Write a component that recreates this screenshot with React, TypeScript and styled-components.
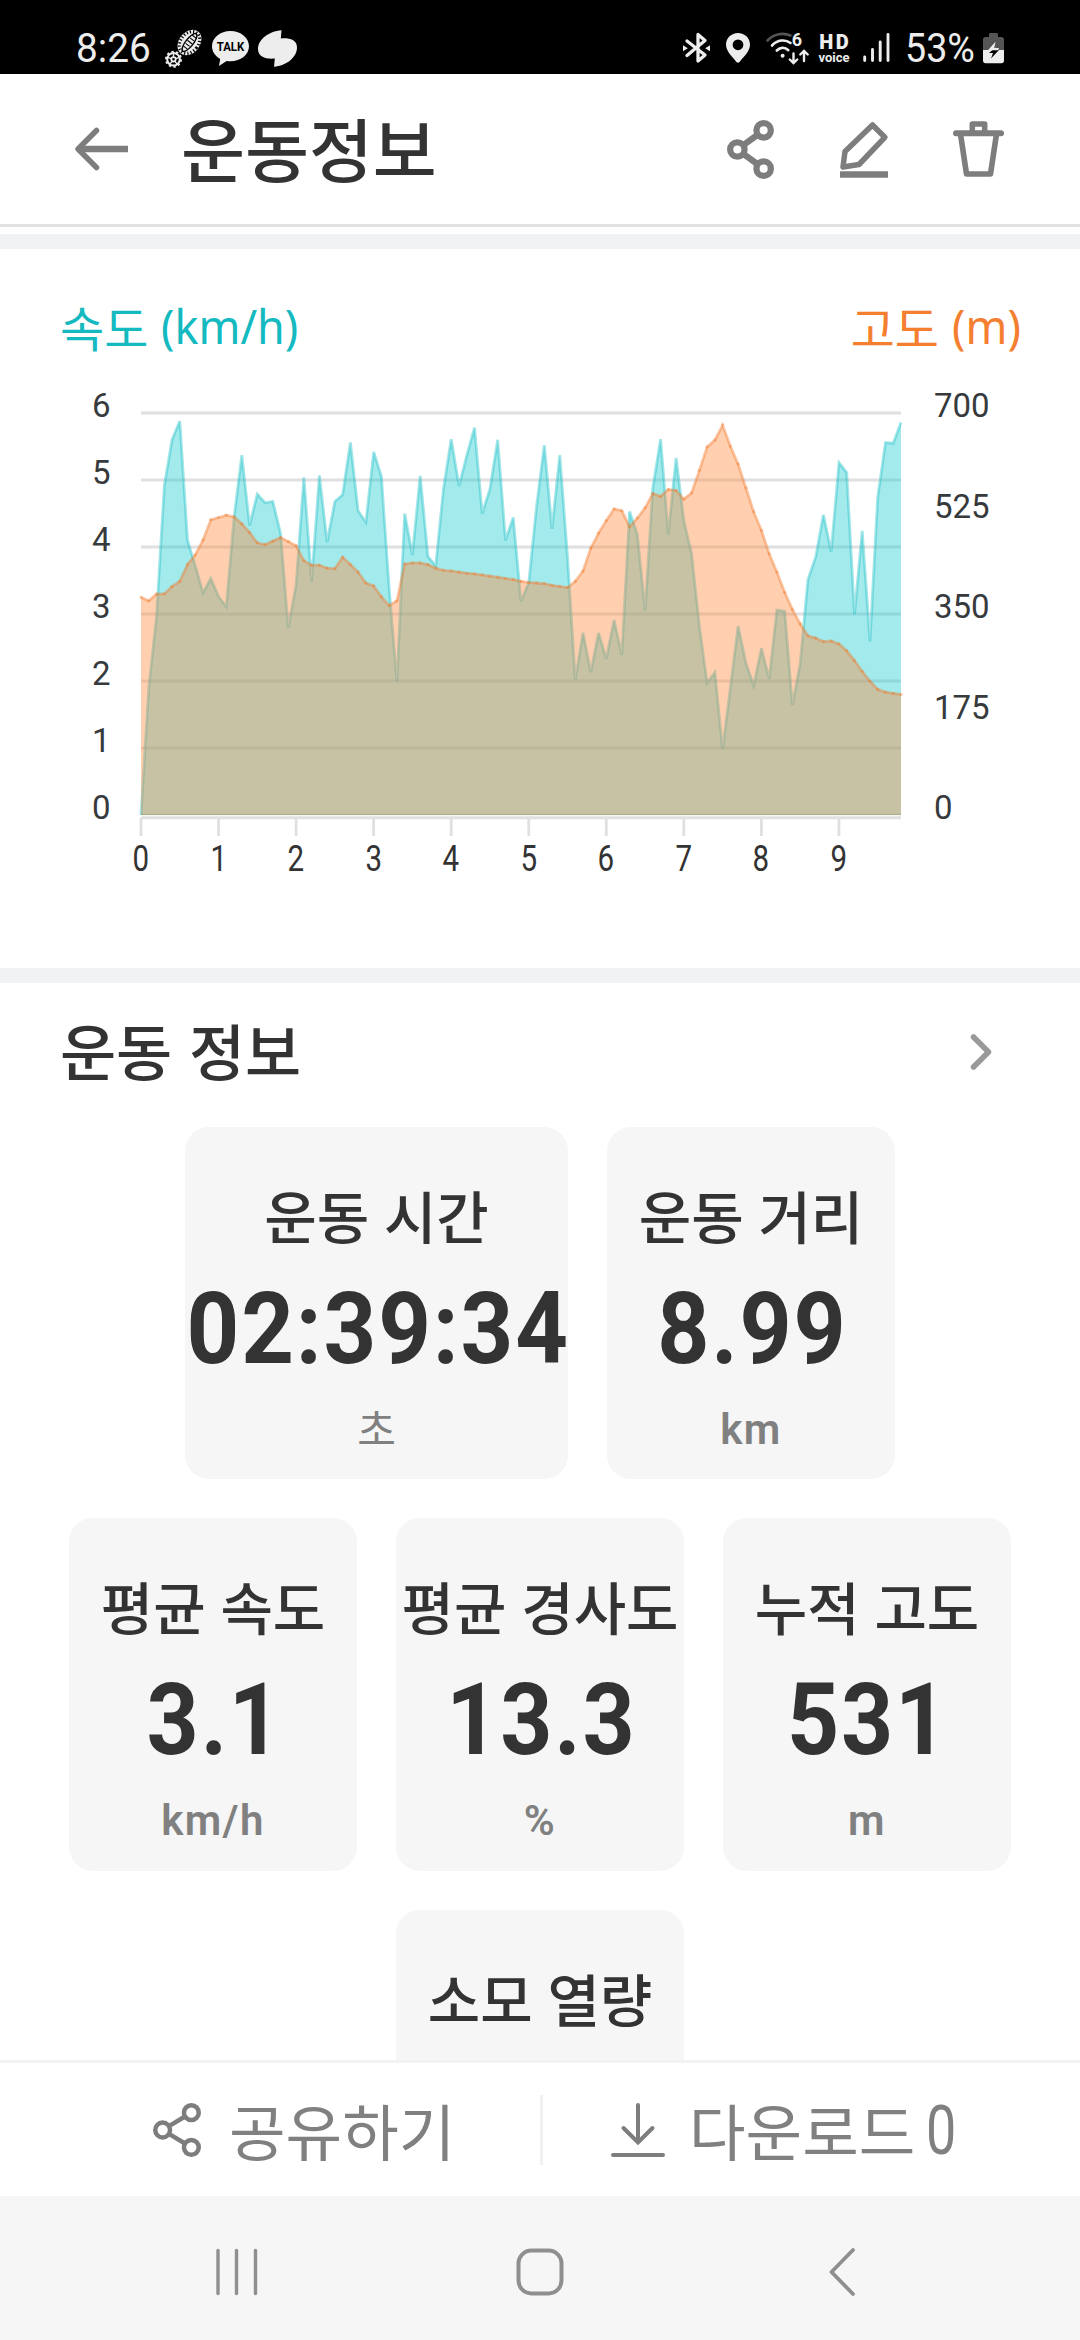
import React from "react";
import styled, { createGlobalStyle } from "styled-components";

const GlobalStyle = createGlobalStyle`
  * { box-sizing: border-box; }
  body {
    margin: 0;
    background: #fff;
    font-family: "Noto Sans CJK KR", Roboto, sans-serif;
    color: #333;
  }
  svg { display: block; flex: none; overflow: visible; }
`;

const Screen = styled.div`
  width: 1080px;
  height: 2340px;
  overflow: hidden;
  display: flex;
  flex-direction: column;
  background: #fff;
`;

const StatusBar = styled.div`
  height: 74px;
  flex: none;
  display: flex;
  justify-content: space-between;
  align-items: flex-start;
  padding: 30px 76px 0 76px;
  background: #000;
  color: #ededed;
  font-family: Roboto, sans-serif;
`;

const StatusGroup = styled.div`
  display: flex;
  align-items: flex-start;
`;

const Slot = styled.div<{ $ml: number; $w: number }>`
  width: ${(p) => p.$w}px;
  margin-left: ${(p) => p.$ml}px;
  flex: none;
`;

const StatusText = styled.div<{ $scale: number }>`
  font-size: 40px;
  line-height: 37px;
  white-space: nowrap;
  transform-origin: left center;
  transform: scaleX(${(p) => p.$scale});
`;

const HdBadge = styled.div`
  display: flex;
  flex-direction: column;
  align-items: center;
  padding-top: 3px;
`;
const HdTop = styled.span`
  font-size: 20px;
  line-height: 18px;
  font-weight: 900;
  letter-spacing: 2.5px;
  margin-right: -2.5px;
  white-space: nowrap;
`;
const HdBottom = styled.span`
  font-size: 13px;
  line-height: 13px;
  font-weight: 700;
  white-space: nowrap;
`;

const Header = styled.header`
  height: 153px;
  flex: none;
  display: flex;
  align-items: center;
  padding: 0 76px 0 75px;
  border-bottom: 3px solid #e2e2e2;
`;

const Title = styled.h1`
  margin: -4px 0 0 53px;
  font-size: 69.5px;
  line-height: 100px;
  font-weight: 500;
  white-space: nowrap;
`;

const Actions = styled.div`
  margin-left: auto;
  display: flex;
  align-items: center;
  gap: 65.5px;
`;

const Band = styled.div<{ $mt?: number }>`
  height: 15px;
  flex: none;
  margin-top: ${(p) => p.$mt ?? 0}px;
  background: #f1f2f4;
`;

const ChartSection = styled.section`
  height: 719px;
  flex: none;
`;

const Legend = styled.div`
  height: 123px;
  display: flex;
  justify-content: space-between;
  padding: 42px 59px 0 60px;
`;

const LegendText = styled.div<{ $color: string }>`
  display: flex;
  gap: 13px;
  font-size: 48px;
  line-height: 70px;
  white-space: pre;
  color: ${(p) => p.$color};
`;

const LegendUnit = styled.span<{ $w: number }>`
  width: ${(p) => p.$w}px;
  font-family: "Noto Sans", sans-serif;
  font-size: 48px;
  line-height: 70px;
  transform-origin: left center;
  transform: scaleX(0.935);
`;

const ChartRow = styled.div`
  display: flex;
  height: 466px;
`;

const Axis = styled.div<{ $side: "left" | "right" }>`
  display: flex;
  flex-direction: column;
  width: ${(p) => (p.$side === "left" ? 141 : 170)}px;
  padding-left: ${(p) => (p.$side === "left" ? 92 : 33)}px;
  margin-top: ${(p) => (p.$side === "left" ? 0 : -17)}px;
  color: #373a3d;
  font-family: Roboto, sans-serif;
  font-size: 33px;
`;

const AxisLabel = styled.span<{ $h: number }>`
  flex: none;
  height: ${(p) => p.$h}px;
  line-height: ${(p) => p.$h + 1}px;
`;

const XAxis = styled.div`
  display: flex;
  padding-left: 102px;
  height: 40px;
`;

const XLabel = styled.span`
  width: 77.55px;
  text-align: center;
  font-family: Roboto, sans-serif;
  font-size: 36px;
  line-height: 43px;
  transform: scaleX(0.82);
`;

const InfoSection = styled.section`
  height: 1077px;
  flex: none;
  overflow: hidden;
  display: flex;
  flex-direction: column;
`;

const InfoHead = styled.div`
  height: 144px;
  flex: none;
  display: flex;
  justify-content: space-between;
  padding: 0 88px 0 60px;
`;

const InfoTitle = styled.h2`
  margin: 22px 0 0;
  font-size: 61px;
  line-height: 90px;
  font-weight: 500;
  word-spacing: 3px;
  white-space: nowrap;
`;

const Cards = styled.div`
  display: flex;
  flex-wrap: wrap;
  justify-content: center;
  gap: 39px;
  padding: 0 60px;
`;

const Card = styled.article<{ $wide?: boolean }>`
  width: ${(p) => (p.$wide ? 383 : 288)}px;
  height: 352.3px;
  flex: none;
  display: flex;
  flex-direction: column;
  align-items: center;
  padding-top: 47px;
  border-radius: 24px;
  background: #f6f6f6;
`;

const CardLabel = styled.div`
  font-size: 57px;
  line-height: 80px;
  font-weight: 500;
  word-spacing: 2px;
  white-space: nowrap;
`;

const CardValue = styled.div<{ $wide?: boolean }>`
  margin-top: 13px;
  padding-left: 3px;
  font-family: Roboto, sans-serif;
  font-size: 100px;
  line-height: 124px;
  font-weight: 700;
  letter-spacing: 2px;
  white-space: nowrap;
  transform: scaleX(${(p) => (p.$wide ? 0.92 : 0.91)});
`;

const CardUnit = styled.div`
  margin-top: 11px;
  font-family: Roboto, "Noto Sans CJK KR", sans-serif;
  font-size: 42px;
  line-height: 56px;
  font-weight: 600;
  letter-spacing: 1.3px;
  color: #808080;
`;

const CardUnitKo = styled(CardUnit)`
  margin-top: 8px;
  font-family: "Noto Sans CJK KR", sans-serif;
  font-size: 42px;
  font-weight: 400;
  letter-spacing: 0;
`;

const BottomBar = styled.div`
  height: 136px;
  flex: none;
  display: flex;
  align-items: center;
  border-top: 3px solid #f2f2f2;
`;

const BottomAction = styled.div<{ $w: number; $pl: number; $gap: number }>`
  width: ${(p) => p.$w}px;
  flex: none;
  display: flex;
  align-items: center;
  gap: ${(p) => p.$gap}px;
  padding-left: ${(p) => p.$pl}px;
  font-size: 61.5px;
  line-height: 90px;
  white-space: nowrap;
  color: #808080;
`;

const BottomText = styled.span`
  margin-top: 1px;
`;

const Count = styled.span`
  margin: 3px 0 0 -13px;
  font-family: Roboto, sans-serif;
  font-size: 69px;
  transform-origin: left center;
  transform: scaleX(0.78);
`;

const Divider = styled.div`
  width: 3px;
  height: 70px;
  flex: none;
  background: #f1f1f3;
`;

const NavBar = styled.nav`
  height: 144px;
  flex: none;
  display: grid;
  grid-template-columns: repeat(3, 302.5px);
  justify-items: center;
  align-items: center;
  padding: 8px 0 0 86px;
  background: #f6f6f6;
`;

const SPEED = [
  0, 1.9, 2.96, 4.91, 5.6, 5.88, 4.1, 3.72, 3.32, 3.53, 3.26, 3.11, 4.44, 5.37, 4.32, 4.79, 4.66, 4.68, 4.2, 2.79,
  3.44, 5.04, 3.48, 5.07, 4.07, 4.68, 4.78, 5.56, 4.54, 4.37, 5.42, 5.05, 3.38, 1.99, 4.5, 3.88, 5.06, 3.86, 3.72, 4.86,
  5.61, 4.91, 5.36, 5.78, 4.5, 4.87, 5.6, 4.1, 4.44, 3.19, 3.47, 4.6, 5.52, 4.27, 5.37, 3.85, 2.02, 2.72, 2.13, 2.72,
  2.33, 2.91, 2.39, 4.53, 4.19, 3.05, 4.88, 5.61, 4.19, 5.33, 4.39, 3.9, 2.82, 1.97, 2.13, 0.98, 1.9, 2.82, 2.27, 1.93,
  2.49, 2.03, 3.06, 3.04, 1.64, 2.26, 3.51, 3.85, 4.48, 3.93, 5.26, 5.11, 2.99, 4.24, 2.59, 4.74, 5.56, 5.55, 5.86,
];

const ELEVATION = [
  379, 373, 385, 385, 398, 407, 436, 453, 479, 514, 518, 522, 519, 507, 492, 474, 471, 477, 483, 476,
  469, 443, 435, 435, 430, 429, 449, 436, 423, 404, 399, 380, 365, 373, 437, 439, 439, 436, 430, 426,
  425, 423, 421, 420, 418, 416, 414, 412, 410, 407, 405, 404, 403, 400, 398, 396, 407, 425, 465, 491,
  513, 533, 530, 502, 517, 535, 560, 555, 567, 565, 550, 561, 600, 641, 653, 679, 642, 611, 570, 528,
  496, 455, 423, 388, 358, 333, 312, 308, 302, 303, 298, 286, 269, 250, 233, 219, 214, 212, 210,
];

const PLOT_W = 760;
const PLOT_H = 466;
const TOP = 41;
const STEP = 67;
const BASE = TOP + 6 * STEP;

const toPoints = (data: number[], max: number) =>
  data.map((v, i) => [(i * PLOT_W) / (data.length - 1), BASE - (v / max) * (BASE - TOP)] as const);

const Series = ({ data, max, fill, stroke, dots }: { data: number[]; max: number; fill: string; stroke: string; dots?: boolean }) => {
  const pts = toPoints(data, max);
  const line = pts.map(([x, y]) => `${x.toFixed(1)},${y.toFixed(1)}`).join(" ");
  return (
    <g>
      <polygon points={`0,${BASE} ${line} ${PLOT_W},${BASE}`} fill={fill} />
      <polyline points={line} fill="none" stroke={stroke} strokeWidth={2.8} />
      {dots && pts.map(([x, y], i) => <circle key={i} cx={x} cy={y} r={1.5} fill={stroke} />)}
    </g>
  );
};

const Chart = () => (
  <svg width={PLOT_W} height={PLOT_H} viewBox={`0 0 ${PLOT_W} ${PLOT_H}`}>
    {[0, 1, 2, 3, 4, 5].map((i) => (
      <line key={i} x1={0} x2={PLOT_W} y1={TOP + i * STEP} y2={TOP + i * STEP} stroke="#e0e0e2" strokeWidth={2.8} />
    ))}
    <Series data={SPEED} max={6} fill="rgba(25,203,208,0.4)" stroke="rgba(25,190,198,0.4)" />
    <Series data={ELEVATION} max={700} fill="rgba(255,135,58,0.4)" stroke="rgba(240,120,40,0.4)" dots />
    <line x1={0} x2={PLOT_W} y1={BASE - 0.5} y2={BASE - 0.5} stroke="rgba(120,140,90,0.3)" strokeWidth={1.5} />
    <line x1={0} x2={PLOT_W} y1={BASE + 2.8} y2={BASE + 2.8} stroke="#e0e0e0" strokeWidth={3} />
    {Array.from({ length: 10 }, (_, i) => (
      <line key={i} x1={i * 77.55} x2={i * 77.55} y1={BASE + 3} y2={BASE + 21} stroke="#e0e0e0" strokeWidth={2.8} />
    ))}
  </svg>
);

const GRAY = "#7d7d7d";

const TireIcon = () => (
  <svg width="38" height="38" viewBox="0 0 38 38">
    <g transform="rotate(38 24.5 12.5)">
      <ellipse cx="24.5" cy="12.5" rx="10.5" ry="14" fill="#ededed" />
      <ellipse cx="24.5" cy="12.5" rx="8.8" ry="12" fill="none" stroke="#000" strokeWidth="3" strokeDasharray="1.2 2" />
      <ellipse cx="24.5" cy="12.5" rx="3.8" ry="11" fill="none" stroke="#000" strokeWidth="1.4" />
      <path d="M22 5h5M22 8.500h5M21.500 12h6M22 15.500h5M22 19h5" stroke="#000" strokeWidth="1.1" />
    </g>
    <circle cx="8.500" cy="29.300" r="6.300" fill="none" stroke="#ededed" strokeWidth="2" />
    <circle cx="8.500" cy="29.300" r="7.600" fill="none" stroke="#ededed" strokeWidth="1.800" strokeDasharray="2.400 2.370" />
    <circle cx="8.500" cy="29.300" r="2.200" fill="none" stroke="#ededed" strokeWidth="1.800" />
    <path d="M8.500 27v-4M10.700 28.600l3.800-1.200M9.900 31.200l2.300 3.200M7.100 31.200l-2.300 3.200M6.300 28.600l-3.800-1.200" stroke="#ededed" strokeWidth="1.400" />
  </svg>
);

const TalkIcon = () => (
  <svg width="37" height="38" viewBox="0 0 37 38">
    <path d="M18.500 1C8.300 1 0 7.700 0 16.300c0 5.400 3.200 9.900 8.200 12.600L7 36l7.600-5c1.300.2 2.600.3 3.900.3C28.700 31.300 37 24.900 37 16.300S28.700 1 18.500 1z" fill="#ededed" />
    <text x="18.500" y="21.300" textAnchor="middle" textLength="27.500" lengthAdjust="spacingAndGlyphs" fontFamily="Roboto, sans-serif" fontWeight="700" fontSize="13.500" fill="#000">
      TALK
    </text>
  </svg>
);

const LeafIcon = () => (
  <svg width="39" height="38" viewBox="0 0 39 38">
    <path d="M23.500.300l-.700 8.200C31 7.800 39 9.500 39 17.500 39 27 28.500 36 16 36.700l.800-8.200C8.500 29.200 0 27.500 0 19 0 9.500 10.500 1.500 23.500.300z" fill="#ededed" />
  </svg>
);

const BluetoothIcon = () => (
  <svg width="27" height="38" viewBox="0 0 27 38">
    <path d="M4 11l18 14-7 6V4.500l7 6L4 25.500" fill="none" stroke="#ededed" strokeWidth="3.300" strokeLinejoin="round" strokeLinecap="round" />
    <path d="M0 15.200l4.800 3-4.800 3zM27 15.200l-4.800 3 4.800 3z" fill="#ededed" />
  </svg>
);

const PinIcon = () => (
  <svg width="24" height="38" viewBox="0 0 24 38">
    <path fillRule="evenodd" d="M12 3C5.400 3 0 8.100 0 14.600 0 21.500 6 26.500 10.400 32c.900 1 2.300 1 3.200 0C18 26.500 24 21.500 24 14.600 24 8.100 18.600 3 12 3zm0 6.400a5.400 5.400 0 110 10.800 5.400 5.400 0 010-10.800z" fill="#ededed" />
  </svg>
);

const WifiIcon = () => (
  <svg width="43" height="38" viewBox="0 0 43 38">
    <g fill="none" strokeWidth="2.600" strokeLinecap="round">
      <path d="M1.500 10.500C8 3.500 17.500 2.500 24.500 5.500" stroke="#555" />
      <path d="M6 15.500c5.500-6 13.500-6.300 18.500-2.500" stroke="#ededed" />
      <path d="M10.800 20.500c3.500-3.500 8.200-3.500 11.500-.3" stroke="#ededed" />
    </g>
    <circle cx="16.600" cy="25.700" r="2" fill="#ededed" />
    <path d="M27.500 23.500v9M23.800 29.500l3.700 3.600 3.700-3.600M38 31v-9M34.300 24.500l3.700-3.600 3.700 3.600" fill="none" stroke="#ededed" strokeWidth="2.400" strokeLinecap="round" />
    <text x="25.800" y="16.300" fontFamily="Roboto, sans-serif" fontWeight="700" fontSize="18" fill="#ededed">
      6
    </text>
  </svg>
);

const SignalIcon = () => (
  <svg width="27" height="38" viewBox="0 0 27 38">
    <path d="M1.700 27v3.500M9.500 19.500v11M17.200 12v18.500M25 4.500V30.500" stroke="#ededed" strokeWidth="2.900" strokeLinecap="round" />
  </svg>
);

const BatteryIcon = () => (
  <svg width="21" height="38" viewBox="0 0 21 38">
    <path d="M6 4.500C6 3.600 6.600 3 7.500 3h6c.900 0 1.500.600 1.500 1.500V7h3.500C20 7 21 8 21 9.500V20H0V9.500C0 8 1 7 2.500 7H6z" fill="#555" />
    <path d="M0 20h21v10.700c0 1.500-1 2.500-2.500 2.500h-16C1 33.200 0 32.200 0 30.700z" fill="#ededed" />
    <path d="M12.500 12L5 20.200h6.500l1.200-2.500h-2z" fill="#ededed" />
    <path d="M9.500 20h6.500L8 28.500l2-5.500H6z" fill="#000" />
    <path d="M12.500 12l-1.500 6h5l-1 2.200H5.500z" fill="#ededed" />
  </svg>
);

const BackArrow = () => (
  <svg width="53" height="44" viewBox="0 0 53 44">
    <path d="M53 22H4" stroke={GRAY} strokeWidth="6.300" />
    <path d="M21.500 3.500L3 22l18.500 18.500" fill="none" stroke={GRAY} strokeWidth="5.500" strokeLinecap="round" strokeLinejoin="round" />
  </svg>
);

const ShareIcon = ({ w, h, sw, r }: { w: number; h: number; sw: number; r: number }) => {
  const o = r + sw / 2;
  const a = [o, h / 2];
  const b = [w - o, o];
  const c = [w - o, h - o];
  const k = r / Math.hypot(b[0] - a[0], b[1] - a[1]);
  const dx = (b[0] - a[0]) * k;
  const dy = (a[1] - b[1]) * k;
  return (
    <svg width={w} height={h} viewBox={`0 0 ${w} ${h}`} fill="none" stroke={GRAY} strokeWidth={sw}>
      <circle cx={a[0]} cy={a[1]} r={r} />
      <circle cx={b[0]} cy={b[1]} r={r} />
      <circle cx={c[0]} cy={c[1]} r={r} />
      <path d={`M${a[0] + dx} ${a[1] - dy}L${b[0] - dx} ${b[1] + dy}M${a[0] + dx} ${a[1] + dy}L${c[0] - dx} ${c[1] - dy}`} />
    </svg>
  );
};

const EditIcon = () => (
  <svg width="48" height="57" viewBox="0 0 48 57">
    <path d="M32.500 4L44.800 16.300 19 43.500 3 46 5 30.500z" fill="none" stroke={GRAY} strokeWidth="5.500" strokeLinejoin="round" />
    <path d="M0 53.500h48" stroke={GRAY} strokeWidth="6.300" />
  </svg>
);

const TrashIcon = () => (
  <svg width="51" height="56" viewBox="0 0 51 56">
    <path d="M3 12.200h45" stroke={GRAY} strokeWidth="6" strokeLinecap="round" />
    <path d="M19.300 11V3h12.400v8" fill="none" stroke={GRAY} strokeWidth="5.500" strokeLinejoin="round" />
    <path d="M7.500 13l6 40h24l6-40" fill="none" stroke={GRAY} strokeWidth="5.600" strokeLinejoin="round" />
  </svg>
);

const Chevron = styled.svg`
  margin-top: 49px;
`;

const DownloadIcon = () => (
  <svg width="54" height="54" viewBox="0 0 54 54" fill="none" stroke={GRAY} strokeWidth="4" strokeLinecap="round">
    <path d="M27 2v37M12.500 25L27 39.500 41.500 25M2 52h50" />
  </svg>
);

type Metric = { label: string; value: string; unit: string; wide?: boolean };

const METRICS: Metric[] = [
  { label: "운동 시간", value: "02:39:34", unit: "초", wide: true },
  { label: "운동 거리", value: "8.99", unit: "km" },
  { label: "평균 속도", value: "3.1", unit: "km/h" },
  { label: "평균 경사도", value: "13.3", unit: "%" },
  { label: "누적 고도", value: "531", unit: "m" },
  { label: "소모 열량", value: "", unit: "" },
];

export default function App() {
  return (
    <Screen>
      <GlobalStyle />
      <StatusBar>
        <StatusGroup>
          <Slot $ml={0} $w={73}>
            <StatusText $scale={0.97}>8:26</StatusText>
          </Slot>
          <Slot $ml={16} $w={38}><TireIcon /></Slot>
          <Slot $ml={9} $w={37}><TalkIcon /></Slot>
          <Slot $ml={9} $w={39}><LeafIcon /></Slot>
        </StatusGroup>
        <StatusGroup>
          <Slot $ml={0} $w={27}><BluetoothIcon /></Slot>
          <Slot $ml={16} $w={24}><PinIcon /></Slot>
          <Slot $ml={16} $w={43}><WifiIcon /></Slot>
          <Slot $ml={9} $w={32}>
            <HdBadge>
              <HdTop>HD</HdTop>
              <HdBottom>voice</HdBottom>
            </HdBadge>
          </Slot>
          <Slot $ml={13} $w={27}><SignalIcon /></Slot>
          <Slot $ml={15} $w={70}>
            <StatusText $scale={0.94}>53%</StatusText>
          </Slot>
          <Slot $ml={8} $w={21}><BatteryIcon /></Slot>
        </StatusGroup>
      </StatusBar>

      <Header>
        <BackArrow />
        <Title>운동정보</Title>
        <Actions>
          <ShareIcon w={47} h={59} sw={6.3} r={7.2} />
          <EditIcon />
          <TrashIcon />
        </Actions>
      </Header>
      <Band $mt={7} />

      <ChartSection>
        <Legend>
          <LegendText $color="#14babf">
            속도<LegendUnit $w={138}>(km/h)</LegendUnit>
          </LegendText>
          <LegendText $color="#f47f30">
            고도<LegendUnit $w={69}>(m)</LegendUnit>
          </LegendText>
        </Legend>
        <ChartRow>
          <Axis $side="left">
            {[6, 5, 4, 3, 2, 1, 0].map((n) => (
              <AxisLabel key={n} $h={STEP}>{n}</AxisLabel>
            ))}
          </Axis>
          <Chart />
          <Axis $side="right">
            {[700, 525, 350, 175, 0].map((n) => (
              <AxisLabel key={n} $h={STEP * 1.5}>{n}</AxisLabel>
            ))}
          </Axis>
        </ChartRow>
        <XAxis>
          {[0, 1, 2, 3, 4, 5, 6, 7, 8, 9].map((n) => (
            <XLabel key={n}>{n}</XLabel>
          ))}
        </XAxis>
      </ChartSection>
      <Band />

      <InfoSection>
        <InfoHead>
          <InfoTitle>운동 정보</InfoTitle>
          <Chevron width="22" height="40" viewBox="0 0 22 40" fill="none" stroke="#999" strokeWidth="5.500" strokeLinecap="round" strokeLinejoin="round">
            <path d="M3.500 5L18.500 20 3.500 35" />
          </Chevron>
        </InfoHead>
        <Cards>
          {METRICS.map((m) => (
            <Card key={m.label} $wide={m.wide}>
              <CardLabel>{m.label}</CardLabel>
              <CardValue $wide={m.wide}>{m.value}</CardValue>
              {m.unit === "초" ? <CardUnitKo>{m.unit}</CardUnitKo> : <CardUnit>{m.unit}</CardUnit>}
            </Card>
          ))}
        </Cards>
      </InfoSection>

      <BottomBar>
        <BottomAction $w={540} $pl={153} $gap={28}>
          <ShareIcon w={48} h={54} sw={4.5} r={7.4} />
          <BottomText>공유하기</BottomText>
        </BottomAction>
        <Divider />
        <BottomAction $w={537} $pl={68} $gap={24}>
          <DownloadIcon />
          <BottomText>다운로드</BottomText>
          <Count>0</Count>
        </BottomAction>
      </BottomBar>

      <NavBar>
        <svg width="42" height="48" viewBox="0 0 42 48" stroke="#8f8f8f" strokeWidth="3.400" strokeLinecap="round">
          <path d="M2 2.500v43M20.500 2.500v43M39.500 2.500v43" />
        </svg>
        <svg width="48" height="48" viewBox="0 0 48 48" fill="none" stroke="#8f8f8f" strokeWidth="4">
          <rect x="2.500" y="2.500" width="43" height="43" rx="13" />
        </svg>
        <svg width="26" height="48" viewBox="0 0 26 48" fill="none" stroke="#8f8f8f" strokeWidth="3.800" strokeLinecap="round" strokeLinejoin="round">
          <path d="M24 2L2.500 24 24 46" />
        </svg>
      </NavBar>
    </Screen>
  );
}
